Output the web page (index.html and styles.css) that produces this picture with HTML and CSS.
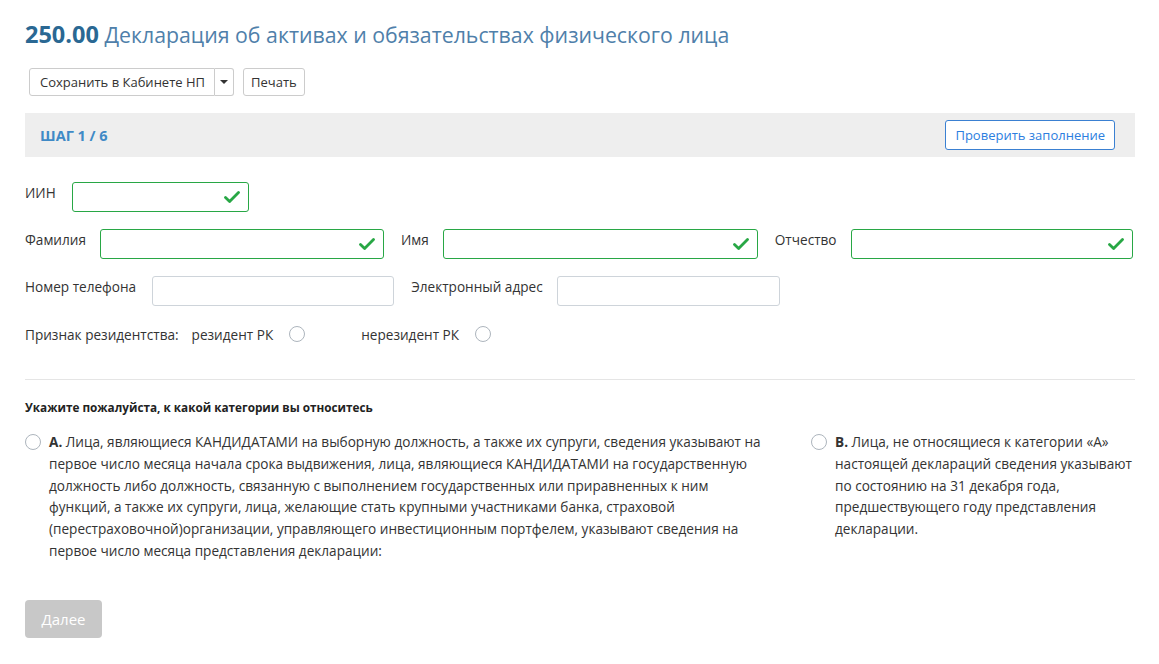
FILE: index.html
```html
<!DOCTYPE html>
<html lang="ru">
<head>
<meta charset="utf-8">
<link rel="stylesheet" href="styles.css">
</head>
<body>
<div class="page">
  <h1 class="title"><b>250.00</b> Декларация об активах и обязательствах физического лица</h1>
  <div class="toolbar">
    <div class="split">
      <button class="btn">Сохранить в Кабинете НП</button>
      <button class="btn caret-btn"><span class="caret"></span></button>
    </div>
    <button class="btn btn-print">Печать</button>
  </div>
  <div class="band">
    <span class="step">ШАГ 1 / 6</span>
    <button class="btn-outline">Проверить заполнение</button>
  </div>

  <div class="row r1">
    <label class="lbl">ИИН</label>
    <div class="inp ok w-iin"><svg class="chk" viewBox="0 0 16 16"><path d="M1.5 8.6 L5.6 12.6 L14.5 3.6" /></svg></div>
  </div>
  <div class="row">
    <label class="lbl">Фамилия</label>
    <div class="inp ok w-fam"><svg class="chk" viewBox="0 0 16 16"><path d="M1.5 8.6 L5.6 12.6 L14.5 3.6" /></svg></div>
    <label class="lbl">Имя</label>
    <div class="inp ok w-name"><svg class="chk" viewBox="0 0 16 16"><path d="M1.5 8.6 L5.6 12.6 L14.5 3.6" /></svg></div>
    <label class="lbl">Отчество</label>
    <div class="inp ok w-otch"><svg class="chk" viewBox="0 0 16 16"><path d="M1.5 8.6 L5.6 12.6 L14.5 3.6" /></svg></div>
  </div>
  <div class="row">
    <label class="lbl">Номер телефона</label>
    <div class="inp w-tel"></div>
    <label class="lbl">Электронный адрес</label>
    <div class="inp w-mail"></div>
  </div>
  <div class="radios">
    <span class="rlbl">Признак резидентства:</span>
    <span class="ropt">резидент РК <span class="radio"></span></span>
    <span class="ropt">нерезидент РК <span class="radio"></span></span>
  </div>

  <hr class="sep">

  <div class="q">Укажите пожалуйста, к какой категории вы относитесь</div>
  <div class="cats">
    <div class="cat cat-a">
      <span class="radio"></span>
      <p><b>А.</b> Лица, являющиеся КАНДИДАТАМИ на выборную должность, а также их супруги, сведения указывают на первое число месяца начала срока выдвижения, лица, являющиеся КАНДИДАТАМИ на государственную должность либо должность, связанную с выполнением государственных или приравненных к ним функций, а также их супруги, лица, желающие стать крупными участниками банка, страховой (перестраховочной)организации, управляющего инвестиционным портфелем, указывают сведения на первое число месяца представления декларации:</p>
    </div>
    <div class="cat cat-b">
      <span class="radio"></span>
      <p><b>В.</b> Лица, не относящиеся к категории «А» настоящей деклараций сведения указывают по состоянию на 31 декабря года, предшествующего году представления декларации.</p>
    </div>
  </div>

  <button class="next">Далее</button>
</div>
</body>
</html>
```
FILE: styles.css
```css
* { box-sizing: border-box; }
html, body { margin: 0; padding: 0; background: #fff; }
body {
  font-family: "Open Sans", "Noto Sans", sans-serif;
  font-size: 13.6px;
  color: #333;
}
.page { padding: 0 24px 0 25px; }

.title {
  margin: 18px 0 0;
  font-size: 21.3px;
  line-height: 32px;
  font-weight: 400;
  color: #4f80aa;
}
.title b { font-weight: 700; font-size: 23.5px; color: #2a6893; }

.toolbar { display: flex; gap: 9px; margin-top: 17px; margin-left: 4px; }
.split { display: flex; }
.btn {
  font-family: inherit;
  font-size: 13px;
  color: #333;
  background: #fff;
  border: 1px solid #ccc;
  border-radius: 3px;
  height: 28px;
  padding: 0 9px;
  cursor: pointer;
}
.split .btn:first-child { border-radius: 3px 0 0 3px; padding: 0 9px 0 10px; }
.split .caret-btn { border-radius: 0 3px 3px 0; border-left-width: 0; width: 19px; padding: 0; display: flex; align-items: center; justify-content: center; }
.caret { width: 0; height: 0; border-left: 4px solid transparent; border-right: 4px solid transparent; border-top: 4px solid #333; }
.btn-print { padding: 0 7px; }

.band {
  margin-top: 17px;
  height: 44px;
  background: #eee;
  display: flex;
  align-items: center;
  justify-content: space-between;
  padding: 0 20px 0 15px;
}
.step { font-weight: 700; font-size: 14.5px; color: #3f8ac6; }
.btn-outline {
  font-family: inherit;
  font-size: 13px;
  color: #2c7ee0;
  background: #fff;
  border: 1px solid #3a80d2;
  border-radius: 3px;
  height: 30px;
  padding: 0 9px;
}

.row { display: flex; align-items: flex-start; margin-top: 17px; }
.row.r1 { margin-top: 25px; }
.lbl { line-height: 20px; padding-top: 1px; margin-right: 14px; white-space: nowrap; }
.inp {
  height: 30px;
  border: 1px solid #ced4da;
  border-radius: 3px;
  margin-right: 17px;
  display: flex;
  align-items: center;
  justify-content: flex-end;
  padding-right: 8px;
}
.inp.ok { border-color: #28a745; }
.chk { width: 16px; height: 16px; fill: none; stroke: #28a745; stroke-width: 2.8; stroke-linecap: round; stroke-linejoin: round; }
.w-iin { width: 177px; margin-left: 2px; }
.w-fam { width: 284px; }
.w-name { width: 315px; }
.w-otch { width: 282px; margin-right: 0; }
.w-tel { width: 242px; margin-left: 2px; }
.w-mail { width: 223px; }

.radios { display: flex; align-items: center; margin-top: 18px; height: 20px; }
.rlbl { margin-right: 13px; }
.ropt { display: flex; align-items: center; gap: 16px; margin-right: 56px; }
.radio {
  display: inline-block;
  width: 16px; height: 16px;
  border: 1px solid #adb5bd;
  border-radius: 50%;
  background: #fff;
  flex: none;
}

.sep { border: 0; border-top: 1px solid #e5e5e5; margin: 35px 0 0; }

.q { font-weight: 700; font-size: 11.75px; margin-top: 18px; line-height: 18px; color: #222; }

.cats { display: flex; margin-top: 15px; }
.cat { display: flex; gap: 8px; align-items: flex-start; }
.cat .radio { margin-top: 3px; }
.cat p { margin: 0; line-height: 21.8px; }
.cat-a { width: 792px; }
.cat-a p { width: 720px; }
.cat-b { flex: 1; }
.cat-b p { width: 300px; }

.next {
  margin-top: 38px;
  width: 77px; height: 38px;
  background: #c8c8c8;
  color: #fff;
  border: 0;
  border-radius: 4px;
  font-family: inherit;
  font-size: 15px;
}
```
